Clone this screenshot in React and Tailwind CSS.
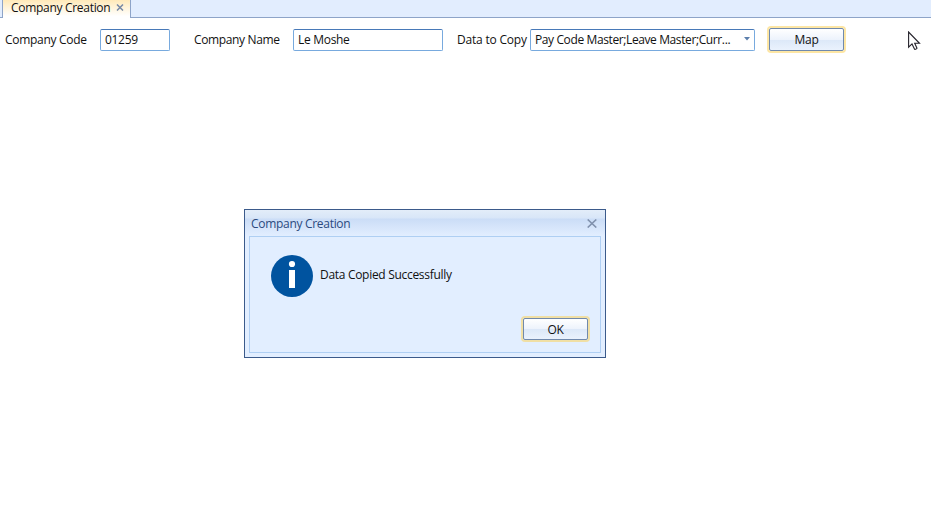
const label = "whitespace-nowrap leading-4";
const field =
  "flex h-[22px] items-center rounded-[2px] border border-[#78aade] border-t-[#4879b8] bg-white pl-1 whitespace-nowrap";
const button =
  "flex items-center justify-center rounded-[2px] border border-[#7089ad] bg-[linear-gradient(#ffffff_0%,#edf3fc_50%,#dce8f8_51%,#eaf2fd_100%)]";

function TabStrip() {
  return (
    <div className="flex h-[18px] bg-[#e2edfe] border-b border-[#8ea4c8]">
      <div className="w-0.5" />
      <div className="flex h-[18px] w-[129px] items-start border-x border-[#8ea4c8] bg-linear-to-b from-[#ffe9b8] to-white to-90% pl-2">
        <span className="w-[99px] whitespace-nowrap leading-4">Company Creation</span>
        <svg className="mt-1 ml-1.5" width="8" height="7" viewBox="0 0 8 7" fill="none" stroke="#7889a5" strokeWidth="1.5">
          <path d="M1 .5 7 6.5M7 .5 1 6.5" />
        </svg>
      </div>
    </div>
  );
}

function Toolbar() {
  return (
    <div className="flex h-[43px] items-center pl-[5px]">
      <span className={`${label} w-[95px]`}>Company Code</span>
      <div className={`${field} w-[70px]`}>01259</div>
      <span className={`${label} ml-6 w-[99px] tracking-[-0.36px]`}>Company Name</span>
      <div className={`${field} w-[150px]`}>Le Moshe</div>
      <span className={`${label} ml-3.5 w-[73px] tracking-[-0.2px]`}>Data to Copy</span>
      <div className={`${field} w-[225px]`}>
        <span className="w-[209px] tracking-[-0.39px]">Pay Code Master;Leave Master;Curr...</span>
        <svg width="6" height="4" viewBox="0 0 6 4" className="-mt-0.5 shrink-0" fill="#5c7fac">
          <path d="M0 0h6L3 3.5z" />
        </svg>
      </div>
      <button className={`${button} ml-3.5 h-[23px] w-[75px] shadow-[0_0_0_2px_#fde6a4]`}>Map</button>
      <svg className="mt-0.5 ml-16" width="13" height="20" viewBox="0 0 13 20" fill="white" stroke="#24222b" strokeWidth="1.1">
        <path d="M.6 1v15.2l3.4-3.3 2.6 5.4q1.5.2 2.4-1.1l-2.3-4.9h4.8z" />
      </svg>
    </div>
  );
}

function MessageDialog() {
  return (
    <div className="absolute top-[209px] left-[244px] flex h-[149px] w-[362px] flex-col border border-[#3b5a8b] bg-[#e2eeff] px-1 pb-1">
      <div className="-mx-1 flex h-[26px] shrink-0 items-center justify-between bg-[linear-gradient(#e3edf9_0px,#d8e6f8_8px,#cbddf7_9px,#e2eeff_26px)] pr-2 pl-1.5 text-[#2b4a7e]">
        <span className="mt-0.5 leading-4">Company Creation</span>
        <svg width="10" height="9" viewBox="0 0 10 9" fill="none" stroke="#8091ad" strokeWidth="1.6">
          <path d="M.7.5 9.3 8.5M9.3.5.7 8.5" />
        </svg>
      </div>
      <div className="flex flex-1 flex-col justify-between border border-[#afcff3] pt-[18px] pr-3 pb-3 pl-[21px]">
        <div className="flex items-start gap-[7px]">
          <svg width="42" height="42" viewBox="0 0 42 42">
            <circle cx="21" cy="21" r="21" fill="#00539f" />
            <circle cx="21" cy="9" r="3.1" fill="white" />
            <path d="M18 15h6v18h-6z" fill="white" />
          </svg>
          <span className="mt-3 leading-4">Data Copied Successfully</span>
        </div>
        <button className={`${button} h-[22px] w-[65px] self-end pt-px shadow-[0_0_0_2px_#f0dfa5]`}>OK</button>
      </div>
    </div>
  );
}

export default function App() {
  return (
    <main className="relative h-[522px] w-[931px] overflow-hidden bg-white font-['Open_Sans','Noto_Sans',sans-serif] text-[12px] tracking-[-0.3px] text-[#111]">
      <TabStrip />
      <Toolbar />
      <MessageDialog />
    </main>
  );
}
